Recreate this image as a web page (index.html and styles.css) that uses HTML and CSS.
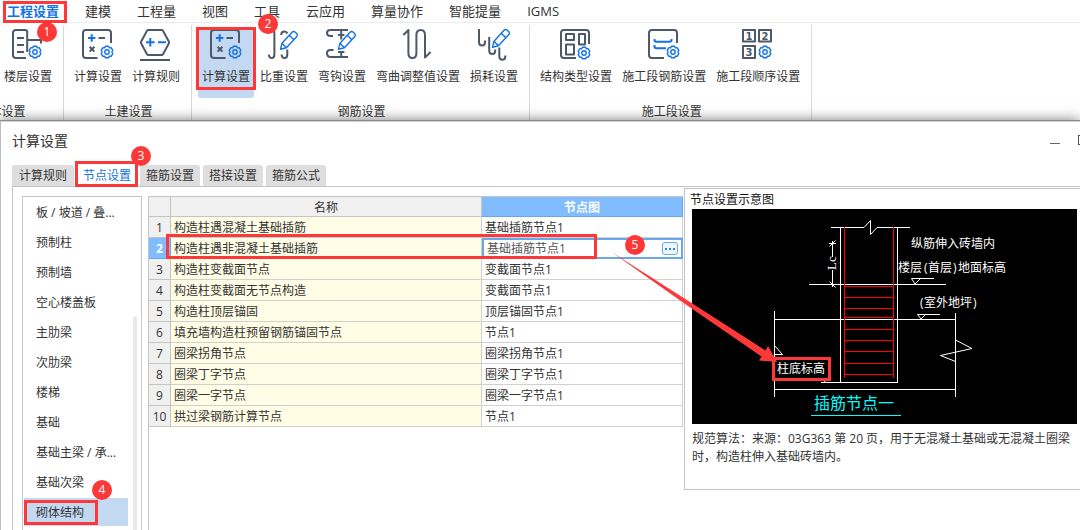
FILE: index.html
```html
<!DOCTYPE html>
<html lang="zh-CN">
<head>
<meta charset="utf-8">
<title>计算设置</title>
<link rel="stylesheet" href="styles.css">
</head>
<body>
<svg class="defs" aria-hidden="true">
  <symbol id="gear" viewBox="-7 -7 14 14">
    <path d="M-1.5-5.8H1.5L2.4-4.1L4.3-4.2L5.8-1.6L4.8 0L5.8 1.6L4.3 4.2L2.4 4.1L1.5 5.8H-1.5L-2.4 4.1L-4.3 4.2L-5.8 1.6L-4.8 0L-5.8-1.6L-4.3-4.2L-2.4-4.1Z"/>
    <circle r="2.2"/>
  </symbol>
  <symbol id="pencil" viewBox="0 0 32 32">
    <path d="M12.5 21.2L14 15.2L24 4.2Q25.5 2.8 27 4L28.8 5.8Q30 7.2 28.8 8.6L18.4 19.8ZM14 15.2L18.4 19.8M21.3 7.2L25.8 11.8"/>
  </symbol>
  <symbol id="calc" viewBox="0 0 32 32">
    <path class="ink" d="M29 15V5Q29 2 26 2H4Q1 2 1 5V27Q1 30 4 30H15.5M16.5 10H23M7.6 18.8L12.4 23.6M12.4 18.8L7.6 23.6"/>
    <path class="accent" d="M6 10H13.4M9.7 6.3V13.7"/>
    <use class="thin" href="#gear" x="18" y="17" width="14" height="14"/>
  </symbol>
</svg>

<nav class="menu">
  <a class="active" href="#">工程设置</a>
  <a href="#">建模</a>
  <a href="#">工程量</a>
  <a href="#">视图</a>
  <a href="#">工具</a>
  <a href="#">云应用</a>
  <a href="#">算量协作</a>
  <a href="#">智能提量</a>
  <a href="#">IGMS</a>
</nav>

<div class="ribbon">
  <section class="group first">
    <div class="tools">
      <button type="button" class="tool">
        <svg class="icon" viewBox="0 0 32 32"><path class="ink" d="M15.2 24V4Q15.2 2 13 2H4Q1 2 1 5V27Q1 30 4 30H14M5 10H12M5 17H12M5 24H12M15.2 12H29V15.5"/><use class="thin" href="#gear" x="16" y="17" width="14" height="14"/></svg>
        <span>楼层设置</span>
      </button>
    </div>
    <h2>整体设置</h2>
  </section>
  <section class="group">
    <div class="tools">
      <button type="button" class="tool">
        <svg class="icon" viewBox="0 0 32 32"><use href="#calc"/></svg>
        <span>计算设置</span>
      </button>
      <button type="button" class="tool">
        <svg class="icon" viewBox="0 0 32 32"><path class="ink" d="M8.4 2H21.6Q22.6 2 23 2.8L28.8 13.4Q29.4 14.5 28.8 15.6L23 26.2Q22.6 27 21.6 27H8.4Q7.4 27 7 26.2L1.2 15.6Q.6 14.5 1.2 13.4L7 2.8Q7.4 2 8.4 2ZM0 32H30"/><path class="accent" d="M6 14.3H14.6M10.3 10V18.6M18 14.3H26"/></svg>
        <span>计算规则</span>
      </button>
    </div>
    <h2>土建设置</h2>
  </section>
  <section class="group">
    <div class="tools">
      <button type="button" class="tool selected">
        <svg class="icon" viewBox="0 0 32 32"><use href="#calc"/></svg>
        <span>计算设置</span>
      </button>
      <button type="button" class="tool">
        <svg class="icon" viewBox="0 0 32 32"><path class="ink" d="M.8 26.5Q1 30 3.6 30Q6.4 30 6.4 26.5V5.5Q6.4 2 3.6 2Q1 2 .8 5.5M13.2 7Q13.2 3.6 16.6 3.6Q18.6 3.6 19.4 5.5M19.3 21.5V26.5Q19.3 30 16.5 30Q13.8 30 13.6 26.5"/><use class="thin" href="#pencil"/></svg>
        <span>比重设置</span>
      </button>
      <button type="button" class="tool">
        <svg class="icon" viewBox="0 0 32 32"><path class="ink" d="M22 2H4.5Q1 2 1 5Q1 8 4.5 8H7M15.2 2V11.5M12 7H18.4M7.5 22H4.5Q1 22 1 25Q1 29 4.5 29H22M15.2 24V29M12 24H18.4"/><use class="thin" href="#pencil"/></svg>
        <span>弯钩设置</span>
      </button>
      <button type="button" class="tool">
        <svg class="icon" viewBox="0 0 32 32"><path class="ink" d="M1.4 7L6.4 2V25Q6.4 30 10.4 30Q14.4 30 14.4 25V7Q14.4 2 18.7 2Q23 2 23 7V29.5L28.6 24"/></svg>
        <span>弯曲调整值设置</span>
      </button>
      <button type="button" class="tool">
        <svg class="icon" viewBox="0 0 32 32"><path class="ink" d="M1 1V14Q1 17.5 4 17.5Q7 17.5 7 14V12.5M11.2 9V22.5Q11.2 26 14.2 26Q17.2 26 17.2 22.5V21.5M21.3 19.5V28Q21.3 31.8 24.3 31.8Q27.3 31.8 27.3 28.5V27.5"/><use class="thin" href="#pencil" x="2" y="-2" width="32" height="32"/></svg>
        <span>损耗设置</span>
      </button>
    </div>
    <h2>钢筋设置</h2>
  </section>
  <section class="group">
    <div class="tools">
      <button type="button" class="tool">
        <svg class="icon" viewBox="0 0 32 32"><path class="ink" d="M29 16V5Q29 2 26 2H4Q1 2 1 5V27Q1 30 4 30H16M6 6H14V12H6ZM19 6H25V16.6H19ZM6 16.5H14V26.5H6Z"/><use class="thin" href="#gear" x="17" y="18" width="14" height="14"/></svg>
        <span>结构类型设置</span>
      </button>
      <button type="button" class="tool">
        <svg class="icon" viewBox="0 0 32 32"><path class="ink" d="M29 15V5Q29 2 26 2H4Q1 2 1 5V27Q1 30 4 30H16"/><path class="accent" d="M6.5 11V12Q6.5 13.8 8.5 13.8H21.5Q23.5 13.8 23.5 12V11M6.5 17V18.5Q6.5 20.3 8.5 20.3H18"/><use class="thin" href="#gear" x="18" y="17" width="14" height="14"/></svg>
        <span>施工段钢筋设置</span>
      </button>
      <button type="button" class="tool">
        <svg class="icon" viewBox="0 0 32 32"><path class="ink" d="M1 2H13V13.5H1ZM17 2H29V13.5H17ZM1 18H13V30H1Z"/><g class="digits"><text x="7" y="11.5">1</text><text x="23" y="11.5">2</text><text x="7" y="27.8">3</text></g><use class="thin" href="#gear" x="16" y="17" width="14" height="14"/></svg>
        <span>施工段顺序设置</span>
      </button>
    </div>
    <h2>施工段设置</h2>
  </section>
</div>

<main class="dialog">
  <header class="titlebar">
    <h1>计算设置</h1>
    <div class="window-buttons">
      <button type="button" class="minimize" aria-label="最小化"></button>
      <button type="button" class="maximize" aria-label="最大化"></button>
    </div>
  </header>

  <div class="tabs" role="tablist">
    <button type="button" role="tab" class="tab wide">计算规则</button>
    <button type="button" role="tab" class="tab current" aria-selected="true">节点设置</button>
    <button type="button" role="tab" class="tab">箍筋设置</button>
    <button type="button" role="tab" class="tab">搭接设置</button>
    <button type="button" role="tab" class="tab">箍筋公式</button>
  </div>

  <div class="panel">
    <aside class="categories">
      <ul>
        <li>板 / 坡道 / 叠...</li>
        <li>预制柱</li>
        <li>预制墙</li>
        <li>空心楼盖板</li>
        <li>主肋梁</li>
        <li>次肋梁</li>
        <li>楼梯</li>
        <li>基础</li>
        <li>基础主梁 / 承...</li>
        <li>基础次梁</li>
        <li class="selected">砌体结构</li>
      </ul>
      <div class="scrollbar"></div>
    </aside>

    <div class="grid">
      <table>
        <colgroup><col class="c-num"><col class="c-name"><col class="c-node"></colgroup>
        <thead><tr><th></th><th>名称</th><th class="current">节点图</th></tr></thead>
        <tbody>
          <tr><th>1</th><td>构造柱遇混凝土基础插筋</td><td>基础插筋节点1</td></tr>
          <tr class="editing"><th>2</th><td>构造柱遇非混凝土基础插筋</td><td><div class="editor"><input type="text" aria-label="节点图" value="基础插筋节点1"><button type="button" aria-label="更多"><i></i><i></i><i></i></button></div></td></tr>
          <tr><th>3</th><td>构造柱变截面节点</td><td>变截面节点1</td></tr>
          <tr><th>4</th><td>构造柱变截面无节点构造</td><td>变截面节点1</td></tr>
          <tr><th>5</th><td>构造柱顶层锚固</td><td>顶层锚固节点1</td></tr>
          <tr><th>6</th><td>填充墙构造柱预留钢筋锚固节点</td><td>节点1</td></tr>
          <tr><th>7</th><td>圈梁拐角节点</td><td>圈梁拐角节点1</td></tr>
          <tr><th>8</th><td>圈梁丁字节点</td><td>圈梁丁字节点1</td></tr>
          <tr><th>9</th><td>圈梁一字节点</td><td>圈梁一字节点1</td></tr>
          <tr><th>10</th><td>拱过梁钢筋计算节点</td><td>节点1</td></tr>
        </tbody>
      </table>
    </div>

    <section class="preview">
      <h2>节点设置示意图</h2>
      <svg class="drawing" viewBox="692 209 385 215">
        <rect x="692" y="209" width="385" height="215"/>
        <g class="white">
          <path d="M831 227.5H864L870.5 220.5V234.5L877 227.5H910M840.5 227V382M897.5 227V382M809 284.5H946M821 382.5H898"/>
          <path d="M832.5 241V257M832.5 270V287M829 243.5H836M829.5 246.5L835.5 240.5M829.5 281.5L835.5 287.5"/>
          <path d="M934 278.5H911.5L915 284L920 279M940 314.5H917.5L921 319L925 315"/>
          <path d="M774 319.5H955M774.5 311V397M955.5 313V397M774 389.5H955M955.5 340L972 348.5L940.5 355.5L955.5 361.5M774.5 345.5L782.5 354.5H774.5M822 378L825.5 382.5"/>
        </g>
        <path class="red" d="M844.5 227V378M893.5 227V378M844 286.5H893M844 297.5H893M844 308.5H893M844 317.5H893M844 329.5H893M844 340.5H893M844 351.5H893M844 363.5H893M844 374.5H893"/>
        <path class="cyan" d="M811 415.5H901"/>
        <g class="notes">
          <text x="911" y="248">纵筋伸入砖墙内</text>
          <text x="898" y="272">楼层<tspan x="924">(</tspan><tspan x="928">首层</tspan><tspan x="953">)</tspan><tspan x="958">地面标高</tspan></text>
          <text x="920" y="307">(<tspan x="924">室外地坪</tspan><tspan x="973">)</tspan></text>
          <text x="777" y="373">柱底标高</text>
          <text class="dim" transform="translate(836 270) rotate(-90)">Lc</text>
          <text class="caption" x="814" y="409">插筋节点一</text>
        </g>
      </svg>
      <p>规范算法：来源：03G363 第 20 页，用于无混凝土基础或无混凝土圈梁时，构造柱伸入基础砖墙内。</p>
    </section>
  </div>
</main>

<svg class="marks" width="1080" height="530" viewBox="0 0 1080 530">
  <g class="frames">
    <rect x="4.5" y="2.5" width="61" height="19"/>
    <rect x="197.5" y="28.5" width="57" height="60"/>
    <rect x="76.5" y="162.5" width="60" height="23"/>
    <rect x="25.5" y="501.5" width="71" height="22"/>
    <rect x="167.5" y="235.5" width="428" height="22"/>
    <rect x="773.5" y="358.5" width="56" height="21"/>
  </g>
  <path class="arrow" d="M611.5 252L690 302L765.5 350.5L768 346L777 362L759 360.5L761.5 356.5L688 306Z"/>
  <g class="badges">
    <circle cx="47" cy="32" r="10"/><text x="47" y="36">1</text>
    <circle cx="268" cy="24" r="10"/><text x="268" y="28">2</text>
    <circle cx="141" cy="156" r="10"/><text x="141" y="160">3</text>
    <circle cx="102" cy="490" r="10"/><text x="102" y="494">4</text>
    <circle cx="635" cy="245" r="10"/><text x="635" y="249">5</text>
  </g>
</svg>
</body>
</html>
```
FILE: styles.css
```css
* { box-sizing: border-box; }

body {
  position: relative;
  display: flex;
  flex-direction: column;
  height: 100vh;
  margin: 0;
  overflow: hidden;
  background: #fff;
  color: #333;
  font: 12px/18px "Open Sans", "Noto Sans CJK SC", sans-serif;
}

h1, h2, p, ul { margin: 0; padding: 0; font-weight: normal; }
button, input { padding: 0; border: 0; background: none; color: inherit; font: inherit; }
.defs { position: absolute; width: 0; height: 0; }

/* Menu */
.menu {
  display: flex;
  gap: 26px;
  height: 23px;
  padding-left: 7px;
  border-bottom: 1px solid #ececec;
  font-size: 13px;
  line-height: 22px;
}
.menu a { color: #333; text-decoration: none; white-space: nowrap; }
.menu .active { color: #1272e8; font-weight: bold; }

/* Ribbon */
.ribbon { display: flex; height: 98px; padding-top: 2px; }
.group {
  display: flex;
  flex: none;
  flex-direction: column;
  justify-content: space-between;
  padding: 2px 7px 0 6px;
  border-right: 1px solid #d8d8d8;
}
.group.first { width: 126px; margin-left: -62px; }
.first .tools { justify-content: flex-end; }
.group h2 { padding-left: 3px; font-size: 12px; line-height: 18px; text-align: center; }
.tools { display: flex; gap: 2px; }
.tool {
  display: flex;
  flex-direction: column;
  align-items: center;
  gap: 8px;
  height: 71px;
  padding: 1px 4px 0;
  border-radius: 3px;
  white-space: nowrap;
}
.tool.selected { background: #c3d9f1; }

.icon { flex: none; width: 32px; height: 32px; overflow: visible; fill: none; stroke-linejoin: round; }
.ink { fill: none; stroke: #4d5869; stroke-width: 2; }
.accent { fill: none; stroke: #1272e8; stroke-width: 2; }
.thin { fill: none; stroke: #1272e8; stroke-width: 1.4; }
.digits { fill: #4d5869; font: bold 10px "DejaVu Sans", sans-serif; text-anchor: middle; }

/* Dialog */
.dialog {
  position: relative;
  display: flex;
  flex: 1;
  flex-direction: column;
  min-height: 0;
  border-top: 1px solid #d0d0d0;
  border-left: 1px solid #bdbdbd;
  background: #fff;
  box-shadow: 0 -1px 0 #8c8c8c, 0 0 13px rgba(0, 0, 0, .6);
}
.titlebar {
  display: flex;
  justify-content: space-between;
  height: 43px;
  padding: 9px 0 0 11px;
}
.titlebar h1 { font-size: 14px; line-height: 20px; }
.window-buttons { display: flex; gap: 18px; height: 24px; padding-top: 1px; overflow: hidden; }
.minimize { width: 10px; border-bottom: 1px solid #666; height: 12px; }
.maximize { width: 10px; height: 10px; margin: 3px -8px 0 0; border: 1px solid #555; }

.tabs { display: flex; gap: 3px; padding-left: 11px; }
.tab {
  height: 21px;
  padding: 0 6px;
  border-radius: 3px 3px 0 0;
  background: #dedede;
  line-height: 21px;
  white-space: nowrap;
}
.tab.wide { padding: 0 7px; }
.tab.current { background: #fff; color: #1272e8; }

.panel {
  display: grid;
  flex: 1;
  grid-template-columns: 120px 541px 1fr;
  min-height: 0;
  margin-left: 11px;
  padding-left: 9px;
  border-top: 1px solid #c4c4c8;
  border-left: 1px solid #c4c4c8;
}

.categories {
  display: flex;
  justify-content: space-between;
  min-height: 0;
  margin-top: 9px;
  padding: 1px 4px 0 1px;
  border: 1px solid #c8c8c8;
  border-bottom: 0;
}
.categories ul { display: flex; flex-direction: column; gap: 2px; width: 104px; list-style: none; }
.categories li { flex: none; height: 28px; padding-left: 12px; line-height: 30px; white-space: nowrap; }
.categories .selected { background: #c3d9f1; }
.scrollbar { width: 4px; margin-top: 118px; border-radius: 2px 2px 0 0; background: #e8e8e8; }

/* Node table */
.grid { margin: 9px 0 0 6px; border-top: 1px solid #c4c4c4; border-left: 1px solid #c4c4c4; }
table { width: 100%; border-spacing: 0; table-layout: fixed; }
.c-num { width: 22px; }
.c-name { width: 311px; }
th, td {
  height: 21px;
  padding: 2px 3px 0;
  border-right: 1px solid #d0d0d0;
  border-bottom: 1px solid #d0d0d0;
  line-height: 18px;
  text-align: left;
  white-space: nowrap;
}
thead th { height: 20px; line-height: 17px; }
th { padding: 2px 0 0; border-color: #c4c4c4; background: #f0f0f0; font-weight: normal; text-align: center; }
td:nth-child(2) { background: #fffde6; }
thead .current, .editing th { border-color: #68a8e8; background: #80bcff; color: #fff; font-weight: bold; }
.editing td:last-child { padding: 0; border: 0; }
.editor { display: flex; align-items: center; height: 21px; padding: 0 3px; border: 2px solid #68a8e8; background: #fff; }
.editor input { flex: 1; min-width: 0; height: 17px; padding-top: 1px; outline: 0; color: #555; }
.editor button {
  display: flex;
  align-items: center;
  justify-content: center;
  gap: 2px;
  width: 16px;
  height: 13px;
  border: 1px solid #68a8e8;
  border-radius: 3px;
  background: #eef5fd;
}
.editor i { width: 2px; height: 2px; background: #2f7fdc; }

/* Preview */
.preview {
  align-self: start;
  margin: 1px 0 0 1px;
  padding: 0 3px 23px 7px;
  border: 1px solid #c4c4c8;
  border-right: 0;
}
.preview h2 { margin-left: -2px; padding-top: 2px; color: #111; font-size: 12px; line-height: 18px; }
.drawing { display: block; width: 100%; height: auto; fill: none; }
.drawing rect { fill: #000; }
.white { stroke: #fff; }
.red { stroke: #f00; }
.cyan { stroke: #0ff; }
.notes { fill: #fff; font-size: 12px; }
.dim { font: 13px "Liberation Serif", serif; }
.caption { fill: #0ff; font-size: 16px; }
.preview p { padding-top: 6px; }

/* Numbered callouts over the window */
.marks { position: absolute; top: 0; left: 0; pointer-events: none; }
.frames { fill: none; stroke: #fd3838; stroke-width: 3; }
.arrow, .badges circle { fill: #fd3838; }
.badges text { fill: #fff; font-size: 12px; text-anchor: middle; }
```
